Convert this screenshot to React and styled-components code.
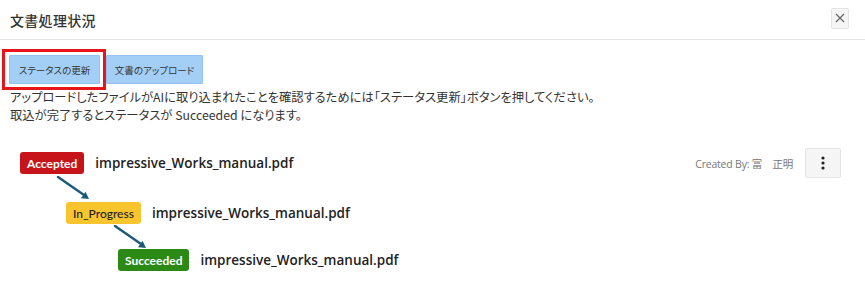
import React from 'react';
import styled, { createGlobalStyle } from 'styled-components';

const GlobalStyle = createGlobalStyle`
  html, body {
    margin: 0;
    padding: 0;
    background: #fff;
  }
  body {
    font-family: "Open Sans", "Noto Sans CJK JP", sans-serif;
    color: #333;
  }
`;

const Dialog = styled.div`
  width: 865px;
  height: 284px;
  background: #fff;
  overflow: hidden;
`;

const Header = styled.div`
  height: 40px;
  box-sizing: border-box;
  display: flex;
  align-items: center;
  justify-content: space-between;
  padding: 0 16px 0 10px;
  border-bottom: 1px solid #e3e3e3;
`;

const Title = styled.h2`
  margin: 0;
  font-family: "Noto Sans CJK JP", sans-serif;
  font-size: 14px;
  font-weight: 500;
  color: #333;
  letter-spacing: 0.3px;
`;

const IconButton = styled.button`
  display: flex;
  align-items: center;
  justify-content: center;
  padding: 0;
  width: ${p => p.$w}px;
  height: ${p => p.$h}px;
  margin-top: ${p => p.$mt || 0}px;
  background: #f5f5f5;
  border: 1px solid #e4e4e4;
  border-radius: 2px;
  color: #666;
  cursor: pointer;
`;

const Body = styled.div`
  padding: 9px 24px 0 10px;
`;

const Toolbar = styled.div`
  display: flex;
  align-items: center;
  margin-left: -8px;
`;

const HighlightFrame = styled.div`
  display: flex;
  border: 3px solid #e8141b;
  padding: 3px 3px 3px 4px;
`;

const ActionButton = styled.button`
  height: 29px;
  width: ${p => p.$w}px;
  padding: 0;
  background: #a3cff7;
  border: 1px solid #93c3ee;
  border-radius: 1px;
  font-family: "Noto Sans CJK JP", sans-serif;
  font-feature-settings: "palt";
  font-size: 9.5px;
  color: #333;
  cursor: pointer;
`;

const Notice = styled.p`
  margin: -2px 0 0;
  font-family: "Noto Sans CJK JP", sans-serif;
  font-feature-settings: "palt";
  font-size: 12.3px;
  line-height: 18px;
  color: #333;
`;

const StatusList = styled.div`
  margin-top: 28px;
  display: flex;
  flex-direction: column;
  padding-left: 10px;
`;

const Row = styled.div`
  height: 22px;
  display: flex;
  align-items: center;
  gap: 11px;
  padding-left: ${p => p.$indent}px;
`;

const colors = {
  Accepted: '#c7141a',
  In_Progress: '#f8c52f',
  Succeeded: '#2b8a16',
};

const Badge = styled.span`
  height: 22px;
  box-sizing: border-box;
  display: inline-flex;
  align-items: center;
  padding: 0 7px;
  border-radius: 3px;
  background: ${p => colors[p.$status]};
  color: ${p => (p.$status === 'In_Progress' ? '#222' : '#fff')};
  font-family: "Lato", sans-serif;
  font-size: 12px;
  font-weight: ${p => (p.$status === 'In_Progress' ? 500 : 700)};
`;

const FileName = styled.span`
  font-size: 13.5px;
  font-weight: 600;
  color: #222;
`;

const Meta = styled.div`
  margin-left: auto;
  display: flex;
  align-items: center;
  gap: 12px;
`;

const CreatedBy = styled.span`
  font-family: "Open Sans", "Noto Sans CJK JP", sans-serif;
  font-size: 10.5px;
  color: #777;
  letter-spacing: -0.2px;
`;

const Connector = styled.div`
  height: ${p => p.$h}px;
  display: flex;
  align-items: center;
  padding-left: ${p => p.$left}px;
`;

const Arrow = () => (
  <svg width="36" height="24" viewBox="0 0 36 24">
    <line x1="2" y1="1" x2="28" y2="19" stroke="#1c5a7a" strokeWidth="2.4" strokeLinecap="round" />
    <polygon points="33,23 25,22.3 29.6,15.7" fill="#1c5a7a" />
  </svg>
);

const CloseIcon = () => (
  <svg width="10" height="10" viewBox="0 0 10 10">
    <path d="M1 1 L9 9 M9 1 L1 9" stroke="#666" strokeWidth="1.2" />
  </svg>
);

const KebabIcon = () => (
  <svg width="4" height="14" viewBox="0 0 4 14">
    <circle cx="2" cy="2" r="1.6" fill="#222" />
    <circle cx="2" cy="7" r="1.6" fill="#222" />
    <circle cx="2" cy="12" r="1.6" fill="#222" />
  </svg>
);

const file = 'impressive_Works_manual.pdf';

export default function App() {
  return (
    <>
      <GlobalStyle />
      <Dialog>
        <Header>
          <Title>文書処理状況</Title>
          <IconButton $w={18} $h={21} $mt={-3} aria-label="close">
            <CloseIcon />
          </IconButton>
        </Header>
        <Body>
          <Toolbar>
            <HighlightFrame>
              <ActionButton $w={91}>ステータスの更新</ActionButton>
            </HighlightFrame>
            <ActionButton $w={97}>文書のアップロード</ActionButton>
          </Toolbar>
          <Notice>
            アップロードしたファイルがAIに取り込まれたことを確認するためには「ステータス更新」ボタンを押してください。
            <br />
            取込が完了するとステータスが Succeeded になります。
          </Notice>
          <StatusList>
            <Row $indent={0}>
              <Badge $status="Accepted">Accepted</Badge>
              <FileName>{file}</FileName>
              <Meta>
                <CreatedBy>Created By: 富　正明</CreatedBy>
                <IconButton $w={36} $h={30} aria-label="menu">
                  <KebabIcon />
                </IconButton>
              </Meta>
            </Row>
            <Connector $h={28} $left={36}>
              <Arrow />
            </Connector>
            <Row $indent={46}>
              <Badge $status="In_Progress">In_Progress</Badge>
              <FileName>{file}</FileName>
            </Row>
            <Connector $h={25} $left={93}>
              <Arrow />
            </Connector>
            <Row $indent={98}>
              <Badge $status="Succeeded">Succeeded</Badge>
              <FileName>{file}</FileName>
            </Row>
          </StatusList>
        </Body>
      </Dialog>
    </>
  );
}
